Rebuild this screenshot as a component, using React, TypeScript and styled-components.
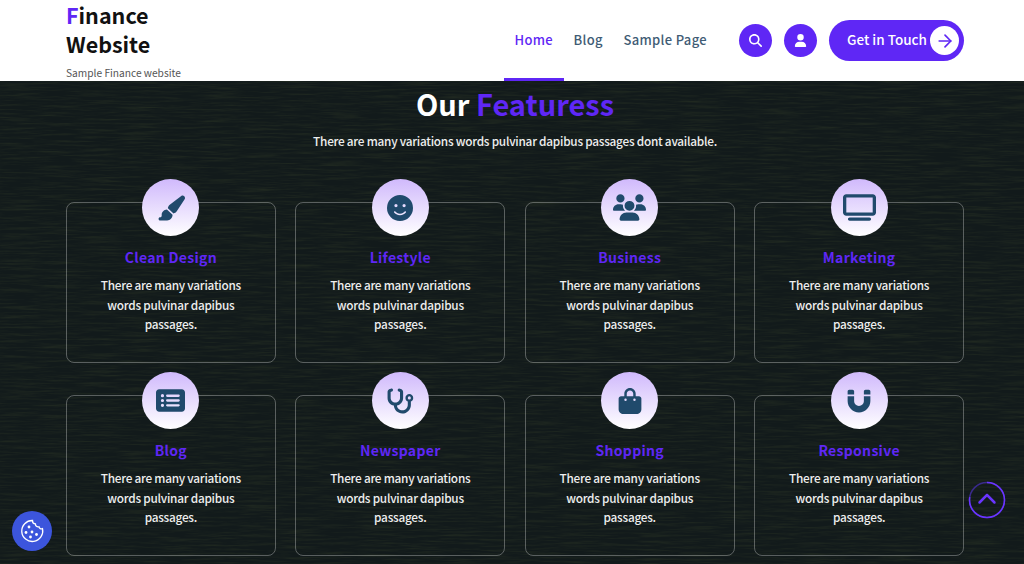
import React from "react";
import styled, { createGlobalStyle } from "styled-components";
import {
  FaPaintbrush,
  FaFaceSmile,
  FaUsers,
  FaTv,
  FaRectangleList,
  FaStethoscope,
  FaBagShopping,
  FaMagnet,
  FaMagnifyingGlass,
  FaUser,
  FaChevronUp
} from "react-icons/fa6";
import { FiArrowRight } from "react-icons/fi";

const purple = "#5f27f5";
const navy = "#204a6c";

// dark wood grain, only short horizontal streaks
const grain = `<svg xmlns='http://www.w3.org/2000/svg' width='1024' height='600'><filter id='g' x='0' y='0' width='100%' height='100%' color-interpolation-filters='sRGB'><feTurbulence type='fractalNoise' baseFrequency='0.025 0.5' numOctaves='4' seed='7'/><feColorMatrix values='0 0 0 0 0.24  0 0 0 0 0.28  0 0 0 0 0.17  0.7 0 0 0 -0.3'/></filter><rect width='1024' height='600' filter='url(#g)'/></svg>`;

const GlobalStyle = createGlobalStyle`
  html, body {
    margin: 0;
    height: 100%;
    overflow: hidden;
    background: #121a1b;
    font-family: "Noto Sans CJK SC", "Noto Sans", sans-serif;
  }
  * {
    box-sizing: border-box;
  }
`;

const Header = styled.header`
  height: 81px;
  background: #fff;
  padding: 0 60px 0 66px;
  display: flex;
  justify-content: space-between;
  overflow: hidden;
`;

const Brand = styled.div`
  padding-top: 0;
  width: 120px;
  flex-shrink: 0;
`;

const BrandName = styled.div`
  font-size: 21.5px;
  line-height: 29px;
  font-weight: 700;
  color: #111;
  span {
    color: ${purple};
  }
`;

const Tagline = styled.div`
  font-size: 10.2px;
  line-height: 14px;
  margin-top: 8px;
  color: #555;
  white-space: nowrap;
`;

const Right = styled.div`
  display: flex;
  align-items: center;
`;

const Nav = styled.nav`
  display: flex;
  gap: 20.5px;
  margin-right: 32px;
  height: 81px;
  padding-bottom: 2px;
  align-items: center;
`;

const NavLink = styled.a<{ $active?: boolean }>`
  position: relative;
  font-size: 13px;
  font-weight: 500;
  letter-spacing: 0.33px;
  color: ${p => (p.$active ? purple : "#3f5c75")};
  &::after {
    content: "";
    display: ${p => (p.$active ? "block" : "none")};
    position: absolute;
    left: -10px;
    right: -11px;
    bottom: -33px;
    height: 4px;
    background: ${purple};
  }
`;

const RoundButton = styled.button`
  width: 33px;
  height: 33px;
  border: 0;
  border-radius: 50%;
  margin-right: 12px;
  padding: 0;
  background: ${purple};
  color: #fff;
  font-size: 13px;
  display: flex;
  align-items: center;
  justify-content: center;
`;

const TouchButton = styled.button`
  width: 135px;
  height: 41px;
  border: 0;
  border-radius: 21px;
  padding: 0 5px 0 18px;
  background: ${purple};
  color: #fff;
  font-family: inherit;
  font-size: 13.5px;
  font-weight: 500;
  display: flex;
  align-items: center;
  justify-content: space-between;
  white-space: nowrap;
`;

const TouchLabel = styled.span`
  margin-bottom: 3px;
`;

const ArrowDot = styled.span`
  width: 29px;
  height: 29px;
  border-radius: 50%;
  background: #fff;
  color: ${purple};
  font-size: 20px;
  display: flex;
  align-items: center;
  justify-content: center;
`;

const Section = styled.section`
  height: 483px;
  padding: 2px 60px 0 66px;
  background-color: #121a1b;
  background-image: url("data:image/svg+xml,${encodeURIComponent(grain)}");
  text-align: center;
`;

const Heading = styled.h2`
  margin: 0;
  font-size: 29px;
  line-height: 40px;
  font-weight: 700;
  color: #fff;
  span {
    color: ${purple};
  }
`;

const Lead = styled.p`
  margin: 8px 0 0;
  font-size: 11.8px;
  letter-spacing: -0.25px;
  line-height: 20px;
  font-weight: 500;
  color: #eee;
`;

const Grid = styled.div`
  margin-top: 51px;
  display: grid;
  grid-template-columns: repeat(4, 1fr);
  column-gap: 19.7px;
  row-gap: 32px;
`;

const Card = styled.div`
  position: relative;
  height: 161px;
  padding: 44px 30px 0;
  border: 1px solid rgba(255, 255, 255, 0.3);
  border-radius: 8px;
`;

const IconCircle = styled.div`
  position: absolute;
  top: -24px;
  left: 50%;
  width: 57px;
  height: 57px;
  margin-left: -28.5px;
  border-radius: 50%;
  background: linear-gradient(180deg, #d0b9fc 0%, #ffffff 100%);
  color: ${navy};
  display: flex;
  align-items: center;
  justify-content: center;
`;

const CardTitle = styled.h3`
  margin: 0;
  font-size: 14px;
  line-height: 20px;
  font-weight: 700;
  letter-spacing: 0.3px;
  color: ${purple};
`;

const CardText = styled.p`
  margin: 8px 0 0;
  font-size: 11.8px;
  letter-spacing: -0.25px;
  line-height: 19.6px;
  font-weight: 500;
  color: #eee;
`;

const CookieButton = styled.div`
  position: fixed;
  left: 12px;
  top: 511px;
  width: 40px;
  height: 40px;
  border-radius: 50%;
  background: #3c55dc;
  display: flex;
  align-items: center;
  justify-content: center;
`;

const ScrollTop = styled.div`
  position: fixed;
  left: 968px;
  top: 481px;
  width: 38px;
  height: 38px;
  color: #6a35ff;
  font-size: 20px;
  display: flex;
  align-items: center;
  justify-content: center;
  svg.ring {
    position: absolute;
    inset: 0;
  }
`;

const features = [
  { title: "Clean Design", icon: <FaPaintbrush size={28} /> },
  { title: "Lifestyle", icon: <FaFaceSmile size={26} /> },
  { title: "Business", icon: <FaUsers size={33} /> },
  { title: "Marketing", icon: <FaTv size={33} /> },
  { title: "Blog", icon: <FaRectangleList size={29} /> },
  { title: "Newspaper", icon: <FaStethoscope size={28} /> },
  { title: "Shopping", icon: <FaBagShopping size={26} /> },
  { title: "Responsive", icon: <FaMagnet size={26} /> }
];

const CookieIcon = () => (
  <svg width="28" height="28" viewBox="0 0 28 28" fill="none" stroke="#fff" strokeWidth="1.3">
    <path d="M14.5 3.5a10.5 10.5 0 1 0 10 8.2c-1.6.7-3.2-.2-3.5-1.9-2 .5-3.8-.9-3.6-3-1.7-.1-3-1.5-2.9-3.3z" />
    <g fill="#fff" stroke="none">
      <circle cx="11" cy="10" r="1.4" />
      <circle cx="8" cy="15.5" r="1.4" />
      <circle cx="14" cy="15" r="1.4" />
      <circle cx="18.5" cy="17.5" r="1.4" />
      <circle cx="12.5" cy="20" r="1.4" />
    </g>
  </svg>
);

const App: React.FC = () => {
  return (
    <>
      <GlobalStyle />
      <Header>
        <Brand>
          <BrandName>
            <span>F</span>inance Website
          </BrandName>
          <Tagline>Sample Finance website</Tagline>
        </Brand>
        <Right>
          <Nav>
            <NavLink $active>Home</NavLink>
            <NavLink>Blog</NavLink>
            <NavLink>Sample Page</NavLink>
          </Nav>
          <RoundButton>
            <FaMagnifyingGlass />
          </RoundButton>
          <RoundButton>
            <FaUser />
          </RoundButton>
          <TouchButton>
            <TouchLabel>Get in Touch</TouchLabel>
            <ArrowDot>
              <FiArrowRight />
            </ArrowDot>
          </TouchButton>
        </Right>
      </Header>
      <Section>
        <Heading>
          Our <span>Featuress</span>
        </Heading>
        <Lead>There are many variations words pulvinar dapibus passages dont available.</Lead>
        <Grid>
          {features.map(f => (
            <Card key={f.title}>
              <IconCircle>{f.icon}</IconCircle>
              <CardTitle>{f.title}</CardTitle>
              <CardText>There are many variations words pulvinar dapibus passages.</CardText>
            </Card>
          ))}
        </Grid>
      </Section>
      <CookieButton>
        <CookieIcon />
      </CookieButton>
      <ScrollTop>
        <svg className="ring" width="38" height="38" viewBox="0 0 38 38" fill="none">
          <circle cx="19" cy="19" r="17.5" stroke="#3a2a8c" strokeWidth="1.5" />
          <circle
            cx="19"
            cy="19"
            r="17.5"
            stroke="#6a35ff"
            strokeWidth="1.5"
            strokeDasharray="85 110"
            transform="rotate(-90 19 19)"
          />
        </svg>
        <FaChevronUp />
      </ScrollTop>
    </>
  );
};

export default App;
